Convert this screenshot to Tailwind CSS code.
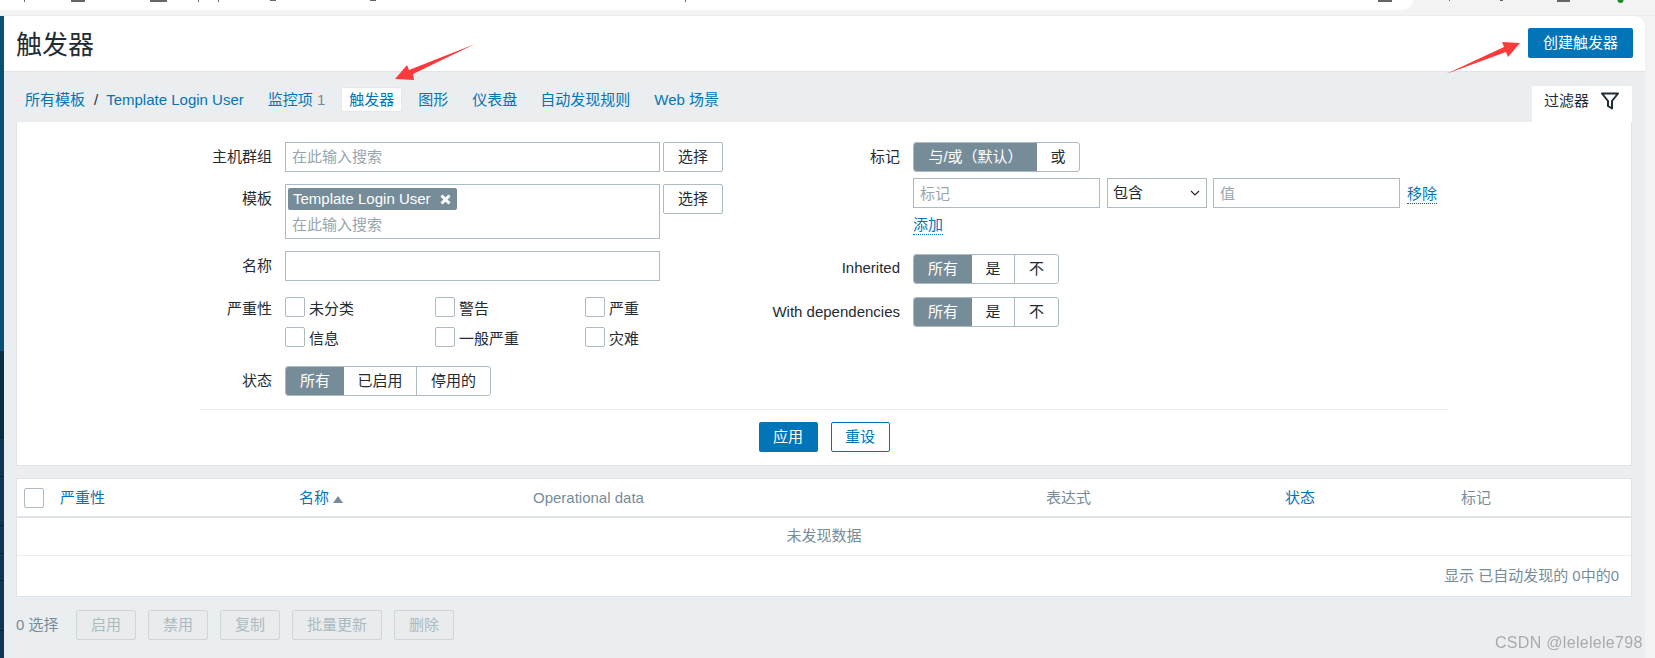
<!DOCTYPE html>
<html lang="zh-CN">
<head>
    <meta charset="UTF-8">
    <meta name="viewport" content="width=device-width, initial-scale=1.0">
    <script src="https://cdn.jsdelivr.net/npm/@tailwindcss/browser@4"></script>
    <title>触发器</title>
</head>
<body class="bg-[#f3f3f3]">
<div class="relative w-[1655px] h-[658px] overflow-hidden bg-[#f3f3f3] text-[15px] text-[#1f2c33] font-['Liberation_Sans','Noto_Sans_CJK_SC',sans-serif]">

    <!-- Browser chrome left over at the top -->
    <div class="w-[1413px] h-[10px] bg-white rounded-br-[12px]"></div>
    <div class="h-[6px] border-b border-[#ececec]"></div>

    <div class="flex">
        <!-- Sidebar edge -->
        <div class="w-[4px] h-[642px] flex flex-col bg-[#0f3650]">
            <div class="h-[335px] shrink-0 bg-[#0a4f74]"></div>
            <div class="h-[87px] shrink-0 bg-[#0c2e44] border-b border-[#07202f]"></div>
            <div class="h-[39px] shrink-0 border-b border-[#07202f]"></div>
            <div class="h-[49px] shrink-0 border-b border-[#07202f]"></div>
            <div class="h-[28px] shrink-0 border-b border-[#07202f]"></div>
            <div class="h-[27px] shrink-0 border-b border-[#07202f]"></div>
            <div class="h-[50px] shrink-0 border-b border-[#07202f]"></div>
        </div>

        <div class="w-[1641px] h-[642px] bg-[#ebeef0] rounded-tr-[10px] overflow-hidden">
            <!-- Header -->
            <div class="h-[56px] bg-white border-b border-[#dfe4e7] flex items-center justify-between pl-[12px] pr-[12px]">
                <h1 class="text-[26px] leading-none pt-[2px] text-[#1f2c33]">触发器</h1>
                <button class="w-[105px] h-[30px] mb-[1px] bg-[#0275b8] text-white rounded-[2px]">创建触发器</button>
            </div>

            <div class="pl-[12px] pr-[13px]">
                <!-- Tabs -->
                <div class="h-[50px] flex justify-between">
                    <ul class="flex items-center gap-[23px] h-[25px] mt-[16px] pl-[9px] text-[#0275b8]">
                        <li class="flex items-center">
                            <a>所有模板</a>
                            <span class="ml-[9px] mr-[8px] text-[#1f2c33]">/</span>
                            <a>Template Login User</a>
                        </li>
                        <li class="ml-[1px]"><a>监控项</a> <span class="text-[#768d99]">1</span></li>
                        <li class="h-[25px] mb-[2px] pt-[2px] -mx-[7px] px-[7px] flex items-center bg-white rounded-[2px] border border-[#e4e8ea]"><a>触发器</a></li>
                        <li><a>图形</a></li>
                        <li class="ml-[1px]"><a>仪表盘</a></li>
                        <li><a>自动发现规则</a></li>
                        <li class="ml-[1px]"><a>Web 场景</a></li>
                    </ul>
                    <div class="w-[100px] h-[36px] mt-[14px] pl-[12px] pb-[6px] flex items-center gap-[12px] bg-white rounded-t-[2px]">
                        <span>过滤器</span>
                        <svg class="w-[18px] h-[18px]" viewBox="0 0 18 18" fill="none" stroke="#1f2c33" stroke-width="2" stroke-linejoin="round"><path d="M1 1.5H17L11 9V16.5L7 14V9Z"/></svg>
                    </div>
                </div>

                <!-- Filter panel -->
                <div class="h-[344px] bg-white border border-[#dfe4e7] border-t-0 pt-[20px]">
                    <div class="flex h-[254px]">
                        <!-- Left column -->
                        <div class="w-[706px] flex flex-col">
                            <div class="flex h-[30px] mb-[12px]">
                                <label class="w-[255px] mr-[13px] text-right leading-[30px]">主机群组</label>
                                <input class="w-[375px] h-[30px] px-[6px] pb-[2px] border border-[#acbbc2] placeholder:text-[#98a6ad] outline-none" placeholder="在此输入搜索">
                                <button class="w-[60px] h-[30px] ml-[3px] border border-[#acbbc2] rounded-[2px]">选择</button>
                            </div>
                            <div class="flex h-[55px] mb-[12px]">
                                <label class="w-[255px] mr-[13px] text-right leading-[30px]">模板</label>
                                <div class="w-[375px] h-[55px] border border-[#acbbc2] px-[2px] pt-[3px]">
                                    <div class="w-[169px] h-[22px] pl-[5px] flex items-center bg-[#768d99] text-white rounded-[2px]">
                                        <span>Template Login User</span>
                                        <svg class="ml-[9px] w-[11px] h-[11px]" viewBox="0 0 11 11" stroke="#fff" stroke-width="3"><path d="M1.5 1.5L9.5 9.5M9.5 1.5L1.5 9.5"/></svg>
                                    </div>
                                    <input class="w-full h-[28px] px-[4px] placeholder:text-[#98a6ad] outline-none" placeholder="在此输入搜索">
                                </div>
                                <button class="w-[60px] h-[30px] ml-[3px] border border-[#acbbc2] rounded-[2px]">选择</button>
                            </div>
                            <div class="flex h-[30px] mb-[16px]">
                                <label class="w-[255px] mr-[13px] text-right leading-[30px]">名称</label>
                                <input class="w-[375px] h-[30px] px-[6px] border border-[#acbbc2] outline-none">
                            </div>
                            <div class="flex h-[50px] mb-[19px]">
                                <label class="w-[255px] mr-[13px] shrink-0 text-right leading-[23px]">严重性</label>
                                <div class="grid shrink-0 grid-cols-[150px_150px_80px] grid-rows-[20px_20px] gap-y-[10px]">
                                    <div class="flex items-start"><span class="w-[20px] h-[20px] mr-[4px] border border-[#acbbc2] rounded-[2px]"></span><span class="leading-[23px]">未分类</span></div>
                                    <div class="flex items-start"><span class="w-[20px] h-[20px] mr-[4px] border border-[#acbbc2] rounded-[2px]"></span><span class="leading-[23px]">警告</span></div>
                                    <div class="flex items-start"><span class="w-[20px] h-[20px] mr-[4px] border border-[#acbbc2] rounded-[2px]"></span><span class="leading-[23px]">严重</span></div>
                                    <div class="flex items-start"><span class="w-[20px] h-[20px] mr-[4px] border border-[#acbbc2] rounded-[2px]"></span><span class="leading-[23px]">信息</span></div>
                                    <div class="flex items-start"><span class="w-[20px] h-[20px] mr-[4px] border border-[#acbbc2] rounded-[2px]"></span><span class="leading-[23px]">一般严重</span></div>
                                    <div class="flex items-start"><span class="w-[20px] h-[20px] mr-[4px] border border-[#acbbc2] rounded-[2px]"></span><span class="leading-[23px]">灾难</span></div>
                                </div>
                            </div>
                            <div class="flex h-[30px]">
                                <label class="w-[255px] mr-[13px] text-right leading-[30px]">状态</label>
                                <div class="flex h-[30px] border border-[#acbbc2] rounded-[3px] overflow-hidden text-center leading-[28px]">
                                    <span class="w-[58px] bg-[#768d99] text-white">所有</span>
                                    <span class="w-[73px] border-r border-[#acbbc2]">已启用</span>
                                    <span class="w-[73px]">停用的</span>
                                </div>
                            </div>
                        </div>

                        <!-- Right column -->
                        <div class="flex-1 flex flex-col">
                            <div class="flex h-[30px] mb-[6px]">
                                <label class="w-[177px] mr-[13px] text-right leading-[30px]">标记</label>
                                <div class="flex h-[30px] border border-[#acbbc2] rounded-[3px] overflow-hidden text-center leading-[28px]">
                                    <span class="w-[123px] bg-[#768d99] text-white">与/或（默认）</span>
                                    <span class="w-[42px]">或</span>
                                </div>
                            </div>
                            <div class="flex h-[30px] ml-[190px] mb-[6px]">
                                <input class="w-[187px] h-[30px] px-[6px] border border-[#acbbc2] placeholder:text-[#98a6ad] outline-none" placeholder="标记">
                                <div class="w-[100px] h-[30px] ml-[7px] pl-[5px] pr-[6px] flex items-center justify-between border border-[#acbbc2]">
                                    <span>包含</span>
                                    <svg class="w-[10px] h-[6px]" viewBox="0 0 10 6" fill="none" stroke="#1f2c33" stroke-width="1.2"><path d="M1 1L5 5L9 1"/></svg>
                                </div>
                                <input class="w-[187px] h-[30px] ml-[6px] px-[6px] border border-[#acbbc2] placeholder:text-[#98a6ad] outline-none" placeholder="值">
                                <a class="ml-[7px] h-[24px] mt-[2px] leading-[28px] text-[#0275b8] border-b border-dotted border-[#0275b8]">移除</a>
                            </div>
                            <div class="h-[34px] ml-[190px] mb-[6px]">
                                <a class="block w-fit h-[21px] text-[#0275b8] border-b border-dotted border-[#0275b8] leading-[22px]">添加</a>
                            </div>
                            <div class="flex h-[30px] mb-[13px]">
                                <label class="w-[177px] mr-[13px] text-right leading-[28px]">Inherited</label>
                                <div class="flex h-[30px] border border-[#acbbc2] rounded-[3px] overflow-hidden text-center leading-[28px]">
                                    <span class="w-[58px] bg-[#768d99] text-white">所有</span>
                                    <span class="w-[43px] border-r border-[#acbbc2]">是</span>
                                    <span class="w-[43px]">不</span>
                                </div>
                            </div>
                            <div class="flex h-[30px]">
                                <label class="w-[177px] mr-[13px] text-right leading-[30px]">With dependencies</label>
                                <div class="flex h-[30px] border border-[#acbbc2] rounded-[3px] overflow-hidden text-center leading-[28px]">
                                    <span class="w-[58px] bg-[#768d99] text-white">所有</span>
                                    <span class="w-[43px] border-r border-[#acbbc2]">是</span>
                                    <span class="w-[43px]">不</span>
                                </div>
                            </div>
                        </div>
                    </div>

                    <div class="ml-[183px] w-[1249px] h-[14px] border-b border-[#ebeef0]"></div>
                    <div class="flex justify-center gap-[13px] mt-[12px]">
                        <button class="w-[59px] h-[30px] bg-[#0275b8] text-white rounded-[2px]">应用</button>
                        <button class="w-[59px] h-[30px] border border-[#0275b8] text-[#0275b8] rounded-[2px]">重设</button>
                    </div>
                </div>

                <!-- Results table -->
                <div class="mt-[12px] h-[119px] flex flex-col bg-white border border-[#dfe4e7]">
                    <div class="h-[39px] shrink-0 pl-[7px] pt-[2px] flex items-center border-b-2 border-[#dfe4e7] text-[#768d99]">
                        <div class="w-[36px]"><span class="block w-[20px] h-[20px] -mt-[2px] border border-[#acbbc2] rounded-[2px]"></span></div>
                        <div class="w-[239px] text-[#0275b8]">严重性</div>
                        <div class="w-[234px] flex items-center text-[#0275b8]">名称
                            <svg class="ml-[4px] mt-[2px] w-[10px] h-[7px]" viewBox="0 0 10 7" fill="#768d99"><path d="M5 0L10 7H0Z"/></svg>
                        </div>
                        <div class="w-[513px]">Operational data</div>
                        <div class="w-[239px]">表达式</div>
                        <div class="w-[176px] text-[#0275b8]">状态</div>
                        <div>标记</div>
                    </div>
                    <div class="h-[38px] shrink-0 flex items-center justify-center border-b border-[#ebeef0] text-[#768d99]">未发现数据</div>
                    <div class="flex-1 flex items-center justify-end pr-[12px] text-[#768d99]">显示 已自动发现的 0中的0</div>
                </div>

                <!-- Bulk actions -->
                <div class="mt-[13px] flex items-center text-[#768d99]">
                    <span class="w-[60px]">0 选择</span>
                    <div class="flex gap-[12px] text-[#acbbc2]">
                        <button class="w-[60px] h-[30px] bg-[#e9ebed] border border-[#ced6da] rounded-[2px]">启用</button>
                        <button class="w-[60px] h-[30px] bg-[#e9ebed] border border-[#ced6da] rounded-[2px]">禁用</button>
                        <button class="w-[60px] h-[30px] bg-[#e9ebed] border border-[#ced6da] rounded-[2px]">复制</button>
                        <button class="w-[90px] h-[30px] bg-[#e9ebed] border border-[#ced6da] rounded-[2px]">批量更新</button>
                        <button class="w-[60px] h-[30px] bg-[#e9ebed] border border-[#ced6da] rounded-[2px]">删除</button>
                    </div>
                </div>
            </div>
        </div>
    </div>

    <!-- Annotations and scraps drawn over the screenshot -->
    <svg class="absolute left-0 top-0 w-[1655px] h-[658px] pointer-events-none" viewBox="0 0 1655 658">
        <g fill="#666">
            <rect x="24" y="0" width="1" height="2"/><rect x="71" y="0" width="14" height="2"/>
            <rect x="150" y="0" width="17" height="2"/><rect x="198" y="0" width="1" height="2"/>
            <rect x="218" y="0" width="1" height="2"/><rect x="270" y="0" width="6" height="1"/>
            <rect x="370" y="0" width="6" height="1"/><rect x="685" y="0" width="1" height="2"/>
            <rect x="1378" y="0" width="14" height="2"/><rect x="1449" y="0" width="1" height="1"/>
            <rect x="1500" y="0" width="3" height="1"/><rect x="1557" y="0" width="13" height="2"/>
        </g>
        <circle cx="1620.5" cy="0" r="3" fill="#1f8a2e"/>
        <polygon fill="#fb3b3b" points="395,79 407,65 409,70 475,44 413,74 414,80"/>
        <polygon fill="#fb3b3b" points="1446,74 1504,47 1502,42 1520,43 1508,57 1506,52"/>
    </svg>
    <div class="absolute left-[1495px] top-[633px] text-[16px] leading-[20px] text-[#aaaaaa] tracking-[0.3px] blur-[0.4px]">CSDN @lelelele798</div>
</div>
</body>
</html>
